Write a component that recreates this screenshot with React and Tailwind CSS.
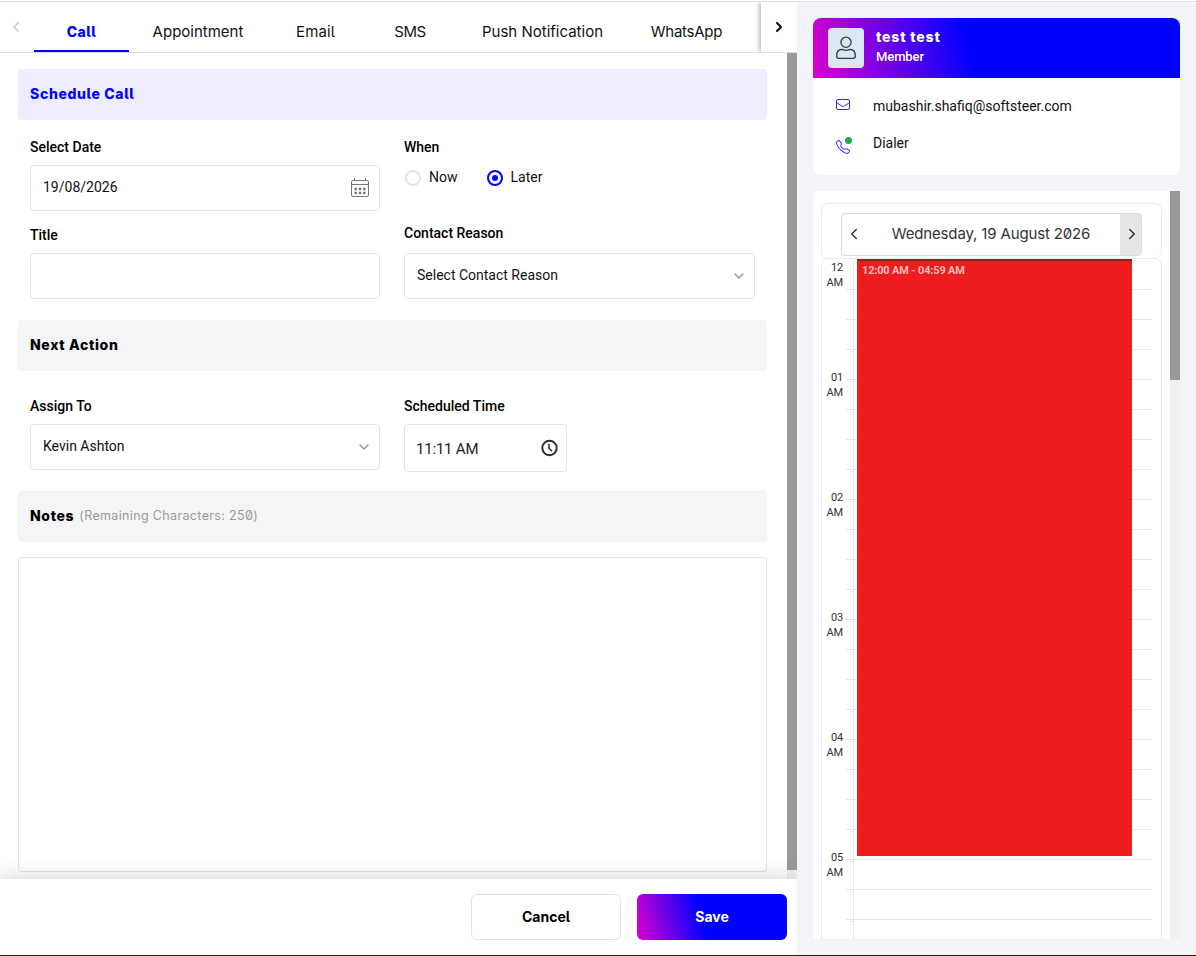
import React, { useState } from 'react';
import { ChevronDown, ChevronLeft, ChevronRight } from 'lucide-react';
import { BsTelephone } from 'react-icons/bs';
import clsx from 'clsx';

const tabs = [
  { name: 'Call', cell: 'w-[95px]', text: 'pb-0.5 font-extrabold text-[#0000ff] text-[14px] tracking-[0.5px]' },
  { name: 'Appointment', cell: 'w-[138px]', text: 'text-[15px]' },
  { name: 'Email', cell: 'w-[97px]', text: 'text-[15px] tracking-[0.1px]' },
  { name: 'SMS', cell: 'w-[92px]', text: 'text-[15px] tracking-[-0.5px]' },
  { name: 'Push Notification', cell: 'w-[173px]', text: 'text-[15px]' },
  { name: 'WhatsApp', cell: 'w-[115px]', text: 'text-[15px] tracking-[-0.25px]' },
];

const hours = ['12', '01', '02', '03', '04', '05'];

const heading = "font-['Inter',sans-serif] [font-feature-settings:'cv05','zero']";

const CalendarIcon = () => (
  <svg width="20" height="22" viewBox="0 0 20 22" fill="none" stroke="#757575">
    <rect x="1.5" y="3.5" width="17" height="16" rx="1.5" />
    <path d="M1.5 7.5h17M4.5 1v3M15.5 1v3" />
    <path d="M4.5 12h2.4M8.8 12h2.4M13.1 12h2.4M4.5 16h2.4M8.8 16h2.4M13.1 16h2.4" strokeWidth="2.4" />
  </svg>
);

const ClockIcon = () => (
  <svg width="18" height="18" viewBox="0 0 18 18" fill="none" stroke="#25303b" strokeWidth="2">
    <circle cx="9.5" cy="9" r="7.2" />
    <path d="M9 4.8v4.400l3 3" strokeWidth="1.6" />
  </svg>
);

const PersonIcon = () => (
  <svg width="20" height="24" viewBox="0 0 20 24" fill="none" stroke="#303a45" strokeWidth="1.3">
    <circle cx="10" cy="6.3" r="5.1" />
    <path d="M5.6 13.5c1.8 0 2.2.8 4.4.8s2.6-.8 4.4-.8c3.3 0 4.9 2.7 4.9 6.6 0 1.5-.8 2.2-2.2 2.2H2.900c-1.400 0-2.200-.7-2.200-2.200 0-3.900 1.600-6.600 4.900-6.600z" />
  </svg>
);

const MailIcon = () => (
  <svg width="16" height="13" viewBox="0 0 16 13" fill="none" stroke="#2b2bff" className="-mt-0.5">
    <rect x="1.5" y="1.5" width="13" height="10" rx="1.5" />
    <path d="M1.5 4.5l4.7 3.2c1.100.8 2.500.8 3.600 0l4.700-3.200" />
  </svg>
);

const SectionHeader = ({ children, active }) => (
  <div
    className={clsx(
      'flex h-[51px] items-center rounded px-3 pb-0.5 text-[14px] font-extrabold tracking-[0.65px]',
      heading,
      active ? 'bg-[#eeecff] text-[#0000ff]' : 'bg-[#f4f5f7] text-black'
    )}
  >
    {children}
  </div>
);

const Label = ({ children, className }) => (
  <div className={clsx('h-[18px] text-sm leading-[18px] font-medium text-black', className)}>{children}</div>
);

const Select = ({ children }) => (
  <div className="flex h-[46px] items-center justify-between rounded border border-[#e4e4e4] pr-[7px] pl-3 text-sm">
    <span className="pb-0.5">{children}</span>
    <ChevronDown className="h-4 w-4 text-[#999]" strokeWidth={2.2} />
  </div>
);

const Radio = ({ label, checked, onClick }) => (
  <div className="flex items-center gap-2 text-sm" onClick={onClick}>
    <span
      className={clsx(
        'mt-px flex h-4 w-4 items-center justify-center rounded-full border-2',
        checked ? 'border-[#0000ff]' : 'border-[#e4e4e4]'
      )}
    >
      {checked && <span className="h-1.5 w-1.5 rounded-full bg-[#0000ff]" />}
    </span>
    <span>{label}</span>
  </div>
);

const TabBar = ({ tab, setTab }) => (
  <div className={clsx('flex h-[51px] shrink-0 border-b border-[#e0e0e0]', heading)}>
    <div className="flex w-[34px] shrink-0 justify-center pt-[17px] text-[#d4d4d4]">
      <ChevronLeft className="-ml-0.5 h-4 w-4" strokeWidth={3} />
    </div>
    <div className="flex w-[727px] overflow-hidden">
      {tabs.map((t) => (
        <button
          key={t.name}
          onClick={() => setTab(t.name)}
          className={clsx(
            'flex h-[50px] shrink-0 items-center justify-center border-b-2 pt-[13px] whitespace-nowrap',
            t.cell,
            t.text,
            tab === t.name ? 'border-[#0000ff]' : 'border-transparent'
          )}
        >
          {t.name}
        </button>
      ))}
    </div>
    <div className="flex grow justify-center bg-white pt-[17px] shadow-[-2px_0_4px_rgba(0,0,0,0.25)] [clip-path:inset(0_0_0_-10px)]">
      <ChevronRight className="h-4 w-4" strokeWidth={3.2} />
    </div>
  </div>
);

const CallForm = () => {
  const [when, setWhen] = useState('Later');

  return (
    <div className="flex grow flex-col pt-4 pr-5 pl-[18px]">
      <SectionHeader active>
        <span>Schedule Call</span>
      </SectionHeader>

      <div className="grid h-[200px] grid-cols-[350px_351px] gap-x-6 px-3 pt-[18px]">
        <div>
          <Label>Select Date</Label>
          <div className="mt-[9px] flex h-[46px] items-center justify-between rounded border border-[#e4e4e4] pr-[9px] pl-3 text-sm">
            <span className="pb-0.5">19/08/2026</span>
            <CalendarIcon />
          </div>
          <Label className="mt-[15px]">Title</Label>
          <div className="mt-[9px] h-[46px] rounded border border-[#e4e4e4]" />
        </div>
        <div>
          <Label>When</Label>
          <div className="mt-[11px] flex h-5 gap-[29px] pl-px">
            <Radio label="Now" checked={when === 'Now'} onClick={() => setWhen('Now')} />
            <Radio label="Later" checked={when === 'Later'} onClick={() => setWhen('Later')} />
          </div>
          <Label className="mt-[37px] mb-[11px]">Contact Reason</Label>
          <Select>Select Contact Reason</Select>
        </div>
      </div>

      <SectionHeader>
        <span>Next Action</span>
      </SectionHeader>

      <div className="grid h-[120px] grid-cols-[350px_351px] gap-x-6 px-3 pt-[26px]">
        <div>
          <Label className="mb-[9px]">Assign To</Label>
          <Select>Kevin Ashton</Select>
        </div>
        <div>
          <Label className="mb-[9px]">Scheduled Time</Label>
          <div className="flex h-12 w-[163px] items-center justify-between rounded border border-[#e4e4e4] pr-2 pl-[11px] text-[#222]">
            <span className="pt-0.5 text-[15px] tracking-[-0.2px]">11:11 AM</span>
            <ClockIcon />
          </div>
        </div>
      </div>

      <SectionHeader>
        <span>Notes</span>
        <span className="ml-[5px] pt-0.5 text-[12.5px] font-normal tracking-[0.35px] text-[#999]">
          (Remaining Characters: 250)
        </span>
      </SectionHeader>
      <div className="mt-[15px] h-[315px] rounded-[3px] border border-[#e4e4e4]" />
    </div>
  );
};

const ContactCard = () => (
  <div className="h-[157px] overflow-hidden rounded-lg bg-white">
    <div className="flex h-[60px] items-center bg-[linear-gradient(75deg,#dc00cc_0%,#0000ff_43%)] pl-[15px] text-white">
      <div className="flex h-10 w-9 items-center justify-center rounded bg-[#dce7f3]">
        <PersonIcon />
      </div>
      <div className="ml-3 flex h-full flex-col pt-2">
        <span className={clsx('pb-0.5 text-[14px] leading-[21px] font-extrabold tracking-[0.85px]', heading)}>test test</span>
        <span className="text-[13px] leading-4 font-medium tracking-[-0.1px]">Member</span>
      </div>
    </div>
    <div className="flex h-[55px] items-center pl-[22px] text-sm">
      <MailIcon />
      <span className="ml-[22px]">mubashir.shafiq@softsteer.com</span>
    </div>
    <div className="flex h-5 items-center pl-[22px] text-sm">
      <span className="relative mt-2 w-4 pl-px">
        <BsTelephone className="h-[14px] w-[14px] text-[#2b2bff]" />
        <span className="absolute -top-[3px] left-[10px] h-[7px] w-[7px] rounded-full bg-[#28a745]" />
      </span>
      <span className="ml-[22px]">Dialer</span>
    </div>
  </div>
);

const DaySchedule = () => (
  <div className="mt-4 flex h-[748px] overflow-hidden rounded-l">
    <div className="w-[357px] bg-white pt-3 pl-2">
      <div className="h-14 w-[341px] rounded-[7px] border border-[#ebebeb] px-[19px] pt-[9px] text-[#333]">
        <div className="flex h-[43px] overflow-hidden rounded border border-[#dadada]">
          <div className="flex w-6 items-center justify-center pb-0.5">
            <ChevronLeft className="-ml-px h-[18px] w-[18px]" />
          </div>
          <div className={clsx('flex grow items-center justify-center pr-1 text-[15px] tracking-[-0.15px]', heading)}>
            Wednesday, 19 August 2026
          </div>
          <div className="flex w-[21px] items-center justify-center bg-[#e6e6e6] pb-0.5 pl-[3px]">
            <ChevronRight className="h-[18px] w-[18px] shrink-0" />
          </div>
        </div>
      </div>

      <div className="-mt-px flex h-[690px] w-[341px] overflow-hidden rounded-t-[7px] border border-[#ebebeb]">
        {/* Hour labels */}
        <div className="w-6 shrink-0 pt-px pr-[3px] text-right text-[11px] leading-[15px] tracking-[-0.2px] text-[#333]">
          {hours.map((hour, i) => (
            <div key={hour} className={i === 0 ? 'h-[110px]' : 'h-[120px]'}>
              {hour}
              <br />
              AM
            </div>
          ))}
        </div>
        {/* Quarter hour slots */}
        <div className="relative w-[306px] shrink-0">
          {Array.from({ length: 24 }, (_, i) => (
            <div key={i} className={clsx('flex border-b border-[#e8e8e8]', i === 0 ? 'h-[31px]' : 'h-[30px]')}>
              <div className="flex w-2 justify-between border-r border-[#e8e8e8]">
                <span />
                {i > 0 && <span className="mt-px h-px w-[3px] bg-[#e8e8e8]" />}
              </div>
            </div>
          ))}
          <div className="absolute top-0 left-[11px] h-[597px] w-[275px] border-t-2 border-[#a01c1c] bg-[#ec1d1c] pt-[3px] pl-[5px] text-[11px] leading-[13px] font-bold tracking-[-0.17px] text-[#fabcbc]">
            12:00 AM - 04:59 AM
          </div>
        </div>
      </div>
    </div>
    <div className="w-2.5 bg-[#f0f0f0]">
      <div className="h-[189px] bg-[#999]" />
    </div>
  </div>
);

const App = () => {
  const [tab, setTab] = useState('Call');

  return (
    <div className="h-[956px] w-[1196px] overflow-hidden border-b border-[#222] bg-white pt-px font-['Roboto',sans-serif] text-[#111]">
      <div className="flex h-[954px] border-t border-[#e0e2e4]">
        <div className="flex w-[797px] flex-col">
          <TabBar tab={tab} setTab={setTab} />
          <div className="flex h-[826px] shrink-0">
            <CallForm />
            <div className="w-2.5 bg-[#f0f0f0]">
              <div className="h-[817px] bg-[#999]" />
            </div>
          </div>
          <div className={clsx('relative flex h-[76px] shrink-0 justify-end gap-4 bg-white pt-[15px] pr-2.5 text-sm shadow-[0_0_20px_rgba(0,0,0,0.2)] [clip-path:inset(-20px_0_0_0)]', heading)}>
            <button className="h-[46px] w-[150px] rounded-md border border-[#e4e4e4] font-bold text-black">Cancel</button>
            <button className="h-[46px] w-[150px] rounded-md bg-[linear-gradient(75deg,#dc00cc_0%,#0000ff_44%)] font-bold text-white">
              Save
            </button>
          </div>
        </div>
        <div className="w-[399px] bg-[#f3f4f7] px-4 pt-4">
          <ContactCard />
          <DaySchedule />
        </div>
      </div>
    </div>
  );
};

export default App;
